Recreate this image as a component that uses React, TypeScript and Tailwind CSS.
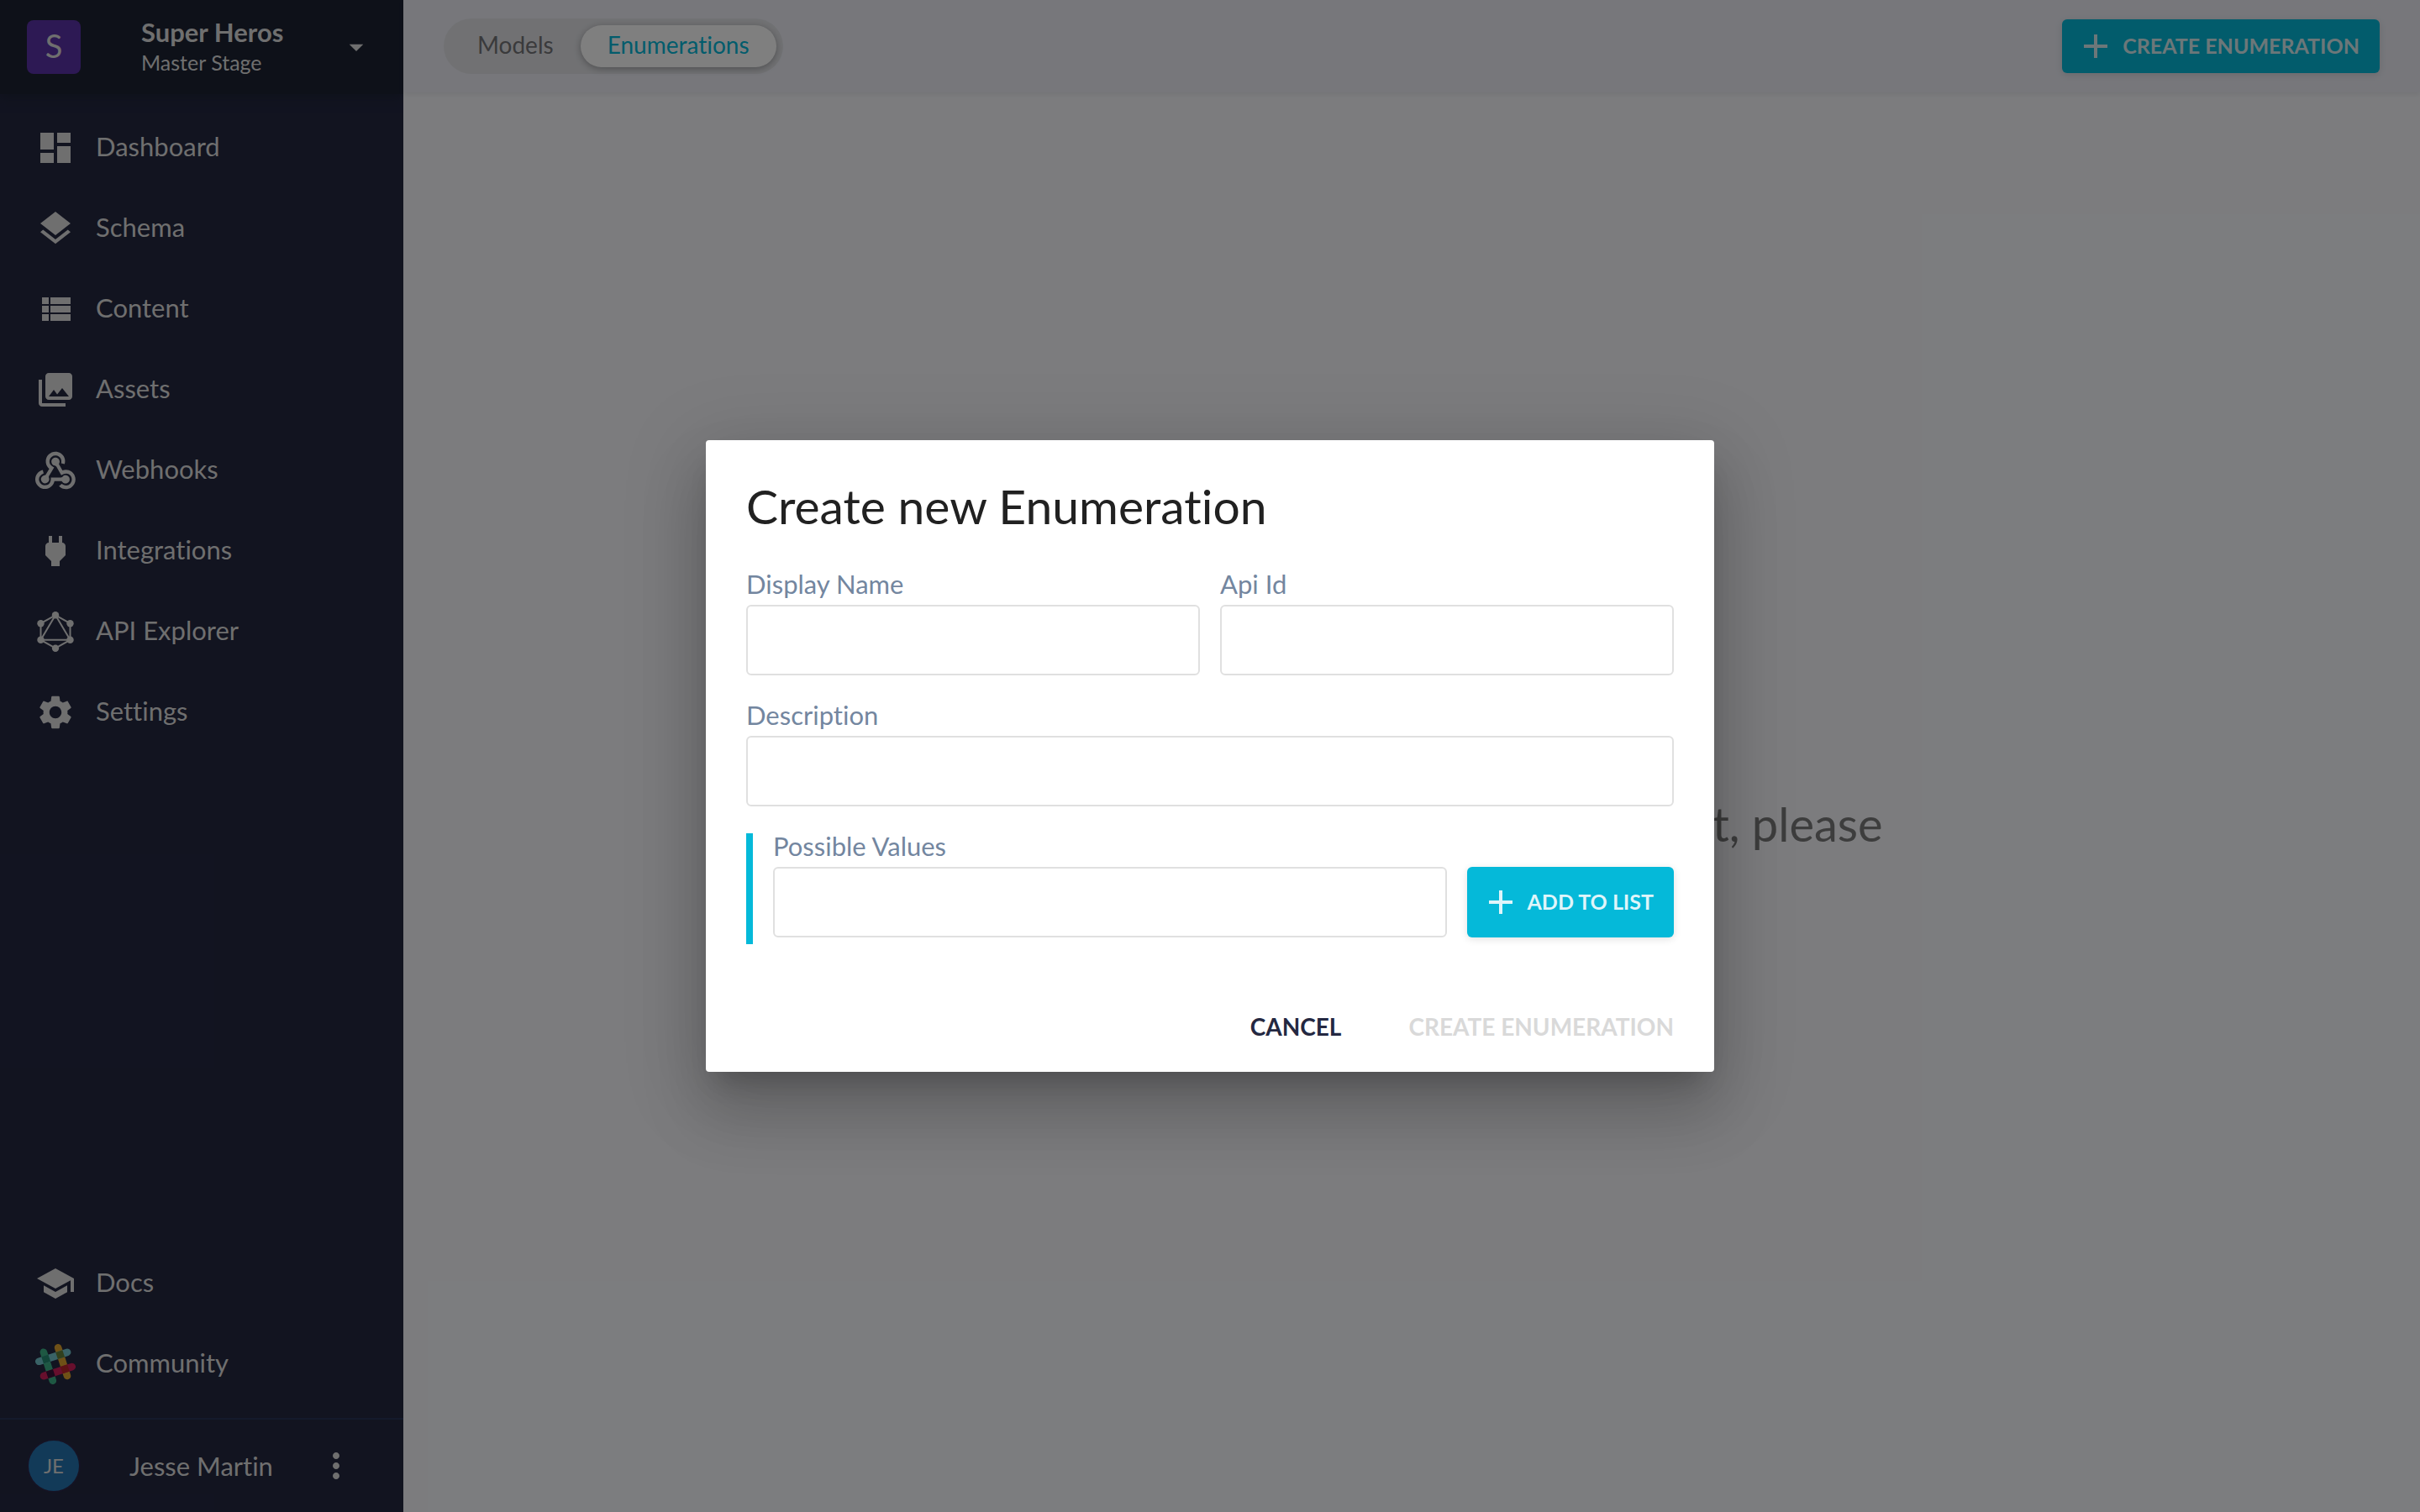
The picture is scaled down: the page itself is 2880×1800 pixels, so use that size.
import { useId, type ReactNode } from "react";

function Glyph({ d }: { d: string }) {
  return (
    <svg viewBox="0 0 24 24" className="size-12 shrink-0" fill="currentColor" aria-hidden="true">
      <path d={d} />
    </svg>
  );
}

const paths = {
  dashboard: "M3 13h8V3H3v10zm0 8h8v-6H3v6zm10 0h8V11h-8v10zm0-18v6h8V3h-8z",
  layers:
    "M11.99 18.54l-7.37-5.73L3 14.07l9 7 9-7-1.63-1.27-7.38 5.74zM12 16l7.36-5.73L21 9l-9-7-9 7 1.63 1.27L12 16z",
  list: "M4 14h4v-4H4v4zm0 5h4v-4H4v4zM4 9h4V5H4v4zm5 5h12v-4H9v4zm0 5h12v-4H9v4zM9 5v4h12V5H9z",
  photos:
    "M22 16V4c0-1.1-.9-2-2-2H8c-1.1 0-2 .9-2 2v12c0 1.1.9 2 2 2h12c1.1 0 2-.9 2-2zm-11-4l2.03 2.71L16 11l4 5H8l3-4zM2 6v14c0 1.1.9 2 2 2h14v-2H4V6H2z",
  power:
    "M16.01 7L16 3h-2v4h-4V3H8v4h-.01C7 6.99 6 7.99 6 8.99v5.49L9.5 18v3h5v-3l3.5-3.51v-5.5c0-1-1-2-1.99-1.99z",
  settings:
    "M19.14 12.94c.04-.3.06-.61.06-.94 0-.32-.02-.64-.07-.94l2.03-1.58c.18-.14.23-.41.12-.61l-1.92-3.32c-.12-.22-.37-.29-.59-.22l-2.39.96c-.5-.38-1.03-.7-1.62-.94l-.36-2.54c-.04-.24-.24-.41-.48-.41h-3.84c-.24 0-.43.17-.47.41l-.36 2.54c-.59.24-1.13.57-1.62.94l-2.39-.96c-.22-.08-.47 0-.59.22L2.74 8.87c-.12.21-.08.47.12.61l2.03 1.58c-.05.3-.09.63-.09.94s.02.64.07.94l-2.03 1.58c-.18.14-.23.41-.12.61l1.92 3.32c.12.22.37.29.59.22l2.39-.96c.5.38 1.03.7 1.62.94l.36 2.54c.05.24.24.41.48.41h3.84c.24 0 .44-.17.47-.41l.36-2.54c.59-.24 1.13-.56 1.62-.94l2.39.96c.22.08.47 0 .59-.22l1.92-3.32c.12-.22.07-.47-.12-.61l-2.01-1.58zM12 15.6c-1.98 0-3.6-1.62-3.6-3.6s1.62-3.6 3.6-3.6 3.6 1.62 3.6 3.6-1.62 3.6-3.6 3.6z",
  school: "M5 13.18v4L12 21l7-3.82v-4L12 17l-7-3.82zM12 3L1 9l11 6 9-4.91V17h2V9L12 3z",
  plus: "M19 13h-6v6h-2v-6H5v-2h6V5h2v6h6v2z",
  more: "M12 8c1.1 0 2-.9 2-2s-.9-2-2-2-2 .9-2 2 .9 2 2 2zm0 2c-1.1 0-2 .9-2 2s.9 2 2 2 2-.9 2-2-.9-2-2-2zm0 6c-1.1 0-2 .9-2 2s.9 2 2 2 2-.9 2-2-.9-2-2-2z",
};

function WebhookIcon() {
  return (
    <svg viewBox="0 -8.5 256 256" className="size-12 shrink-0" fill="currentColor" aria-hidden="true">
      <path d="M119.54 100.503c-10.61 17.836-20.775 35.108-31.152 52.25-2.665 4.401-3.984 7.986-1.855 13.58 5.878 15.454-2.414 30.493-17.998 34.575-14.697 3.851-29.016-5.808-31.932-21.543-2.584-13.927 8.224-27.58 23.58-29.757 1.286-.184 2.6-.205 4.762-.367l23.358-39.168C73.612 95.465 64.868 78.39 66.803 57.23c1.368-14.957 7.25-27.883 18-38.477 20.59-20.288 52.002-23.573 76.246-8.001 23.284 14.958 33.948 44.094 24.858 69.031-6.854-1.858-13.756-3.732-21.343-5.79 2.854-13.865.743-26.315-8.608-36.981-6.178-7.042-14.106-10.733-23.12-12.093-18.072-2.73-35.815 8.88-41.08 26.618-5.976 20.13 3.069 36.575 27.784 48.967z" />
      <path d="M149.841 79.41c7.475 13.187 15.065 26.573 22.587 39.836 38.02-11.763 66.686 9.284 76.97 31.817 12.422 27.219 3.93 59.457-20.465 76.25-25.04 17.238-56.707 14.293-78.892-7.851 5.654-4.733 11.336-9.487 17.407-14.566 21.912 14.192 41.077 13.524 55.305-3.282 12.133-14.337 11.87-35.714-.615-49.75-14.408-16.197-33.707-16.691-57.035-1.143-9.677-17.168-19.522-34.199-28.893-51.491-3.16-5.828-6.648-9.21-13.77-10.443-11.893-2.062-19.571-12.275-20.032-23.717-.453-11.316 6.214-21.545 16.634-25.53 10.322-3.949 22.435-.762 29.378 8.014 5.674 7.17 7.477 15.24 4.491 24.083-.83 2.466-1.905 4.852-3.07 7.774z" />
      <path d="M167.707 187.21h-45.77c-4.387 18.044-13.863 32.612-30.19 41.876-12.693 7.2-26.373 9.641-40.933 7.29-26.808-4.323-48.728-28.456-50.658-55.63-2.184-30.784 18.975-58.147 47.178-64.293 1.947 7.071 3.915 14.21 5.862 21.264-25.876 13.202-34.832 29.836-27.59 50.636 6.375 18.304 24.484 28.337 44.147 24.457 20.08-3.962 30.204-20.65 28.968-47.432 19.036 0 38.088-.197 57.126.097 7.434.117 13.173-.654 18.773-7.208 9.22-10.784 26.191-9.811 36.121.374 10.148 10.409 9.662 27.157-1.077 37.127-10.361 9.62-26.73 9.106-36.424-1.26-1.992-2.136-3.562-4.673-5.533-7.298z" />
    </svg>
  );
}

function GraphIcon() {
  const nodes = [
    [24, 4.3],
    [41.5, 14.2],
    [41.5, 33.8],
    [24, 43.7],
    [6.5, 33.8],
    [6.5, 14.2],
  ];
  return (
    <svg viewBox="0 0 48 48" className="size-12 shrink-0" fill="currentColor" aria-hidden="true">
      <path
        d="M24 4.3 41.5 14.2V33.8L24 43.7 6.5 33.8V14.2ZM24 4.3 41.5 33.8H6.5Z"
        fill="none"
        stroke="currentColor"
        strokeWidth="2"
      />
      {nodes.map(([cx, cy]) => (
        <circle key={`${cx}-${cy}`} cx={cx} cy={cy} r="4.2" />
      ))}
    </svg>
  );
}

function SlackIcon() {
  return (
    <svg viewBox="0 0 48 48" className="size-12 shrink-0" aria-hidden="true" strokeWidth="8.6" fill="none">
      <g strokeLinecap="round">
        <path d="M27.1 4.3 38 38" stroke="#dfa22f" />
        <path d="M9.9 9.7 20.8 43.7" stroke="#3cb187" />
        <path d="M10 38.1 43.7 27.1" stroke="#ce1e5b" />
        <path d="M4.3 20.8 38.1 9.9" stroke="#72c5cd" />
      </g>
      <path d="M8.6 19.4 16.8 16.7" stroke="#248c73" />
      <path d="M25.5 14 33.7 11.3" stroke="#62803a" />
      <path d="M14.1 36.8 22.3 34.1" stroke="#361238" />
      <path d="M31.2 31.1 39.4 28.4" stroke="#bb242a" />
    </svg>
  );
}

function NavItem({ icon, label }: { icon: ReactNode; label: string }) {
  return (
    <li>
      <a href="#" className="flex h-24 items-center gap-6 px-[42px] text-[31px]">
        {icon}
        <span className="pb-1">{label}</span>
      </a>
    </li>
  );
}

function Sidebar() {
  return (
    <aside className="flex w-[480px] shrink-0 flex-col bg-[#242841] text-[#dedede]">
      <button
        type="button"
        className="flex h-28 items-center bg-[#1c2233] pr-9 pl-8 text-left shadow-[0_4px_12px_rgba(28,34,51,0.8)]"
      >
        <span className="flex size-16 items-center justify-center rounded-lg bg-[#5b32a8] pb-1 text-[38px]">S</span>
        <span className="ml-[72px] flex flex-1 flex-col">
          <span className="text-[31px] leading-9 font-bold">Super Heros</span>
          <span className="text-[25px] leading-9">Master Stage</span>
        </span>
        <svg viewBox="0 0 24 24" className="size-10" fill="currentColor" aria-hidden="true">
          <path d="M7 10l5 5 5-5z" />
        </svg>
      </button>
      <nav className="flex flex-1 flex-col justify-between py-4">
        <ul>
          <NavItem icon={<Glyph d={paths.dashboard} />} label="Dashboard" />
          <NavItem icon={<Glyph d={paths.layers} />} label="Schema" />
          <NavItem icon={<Glyph d={paths.list} />} label="Content" />
          <NavItem icon={<Glyph d={paths.photos} />} label="Assets" />
          <NavItem icon={<WebhookIcon />} label="Webhooks" />
          <NavItem icon={<Glyph d={paths.power} />} label="Integrations" />
          <NavItem icon={<GraphIcon />} label="API Explorer" />
          <NavItem icon={<Glyph d={paths.settings} />} label="Settings" />
        </ul>
        <ul>
          <NavItem icon={<Glyph d={paths.school} />} label="Docs" />
          <NavItem icon={<SlackIcon />} label="Community" />
        </ul>
      </nav>
      <div className="flex h-28 items-center border-t-2 border-[#283556] pr-14 pl-[34px]">
        <span className="flex size-[60px] items-center justify-center rounded-full bg-[#2474b0] text-2xl ring-2 ring-[#2a2747]">
          JE
        </span>
        <span className="ml-[60px] flex-1 text-[31px]">Jesse Martin</span>
        <button type="button" aria-label="Account menu">
          <Glyph d={paths.more} />
        </button>
      </div>
    </aside>
  );
}

function Header() {
  return (
    <header className="flex h-[110px] items-center justify-between bg-[#eeeff7] px-12 shadow-[0_2px_6px_rgba(0,0,0,0.08)]">
      <div className="flex h-[66px] items-center rounded-full bg-[#e2e3e7] p-2 text-[28px] text-[#757578]">
        <button type="button" className="h-[50px] px-8 pb-1">
          Models
        </button>
        <button
          type="button"
          className="h-[50px] rounded-full bg-white px-8 pb-1 text-[#05b9d9] shadow-[0_2px_8px_rgba(0,0,0,0.3)]"
        >
          Enumerations
        </button>
      </div>
      <button
        type="button"
        className="flex h-16 items-center gap-2 rounded-md bg-[#05b9d9] pr-6 pl-4 text-[25px] font-bold text-[#d9eff3] shadow-[0_2px_10px_rgba(0,0,0,0.12)]"
      >
        <Glyph d={paths.plus} />
        CREATE ENUMERATION
      </button>
    </header>
  );
}

function Field({ label, className }: { label: string; className?: string }) {
  const id = useId();
  return (
    <div className={className}>
      <label htmlFor={id} className="block pb-2.5 text-[31px] leading-[30px] text-[#73869f]">
        {label}
      </label>
      <input
        id={id}
        type="text"
        className="block h-[84px] w-full rounded-md border-2 border-[#e0e0e0] bg-white px-4 text-[31px] outline-none"
      />
    </div>
  );
}

function EnumerationDialog() {
  return (
    <form
      role="dialog"
      aria-modal="true"
      aria-labelledby="dialog-title"
      className="w-[1200px] max-w-full rounded bg-white px-12 pt-[38px] pb-[22px] shadow-[0_22px_30px_-14px_rgba(0,0,0,0.2),0_48px_76px_6px_rgba(0,0,0,0.14),0_18px_92px_16px_rgba(0,0,0,0.12)]"
    >
      <h2 id="dialog-title" className="text-[57px] leading-20 text-[#212121]">
        Create new Enumeration
      </h2>
      <div className="mt-[38px] grid grid-cols-2 gap-6">
        <Field label="Display Name" />
        <Field label="Api Id" />
      </div>
      <Field label="Description" className="mt-8" />
      <div className="mt-8 flex items-end gap-6 border-l-8 border-[#05b9d9] pb-2 pl-6">
        <Field label="Possible Values" className="flex-1" />
        <button
          type="button"
          className="flex h-[84px] items-center gap-2 rounded-md bg-[#05b9d9] pr-6 pl-4 text-[25px] font-bold text-[#dff5fa] shadow-[0_2px_10px_rgba(0,0,0,0.12)]"
        >
          <Glyph d={paths.plus} />
          ADD TO LIST
        </button>
      </div>
      <div className="mt-[66px] flex justify-end gap-20 text-[28px] font-bold">
        <button type="button" className="h-16 text-[#242841]">
          CANCEL
        </button>
        <button type="submit" disabled className="h-16 text-[#d9d9d9]">
          CREATE ENUMERATION
        </button>
      </div>
    </form>
  );
}

export default function App() {
  return (
    <div className="relative flex min-h-screen font-['Lato',sans-serif] [font-variant-ligatures:none]">
      <Sidebar />
      <div className="flex min-w-0 flex-1 flex-col bg-[#f8f9fd]">
        <Header />
        <main className="flex flex-1 items-center justify-center pt-13">
          <p className="text-center text-[56px] leading-18 text-[#7b7b7b]">
            Enumerations
            <br />
            You have no created enumerations yet, please
            <br />
            create one
          </p>
        </main>
      </div>
      <div className="absolute inset-0 flex items-center justify-center bg-black/50">
        <EnumerationDialog />
      </div>
    </div>
  );
}
